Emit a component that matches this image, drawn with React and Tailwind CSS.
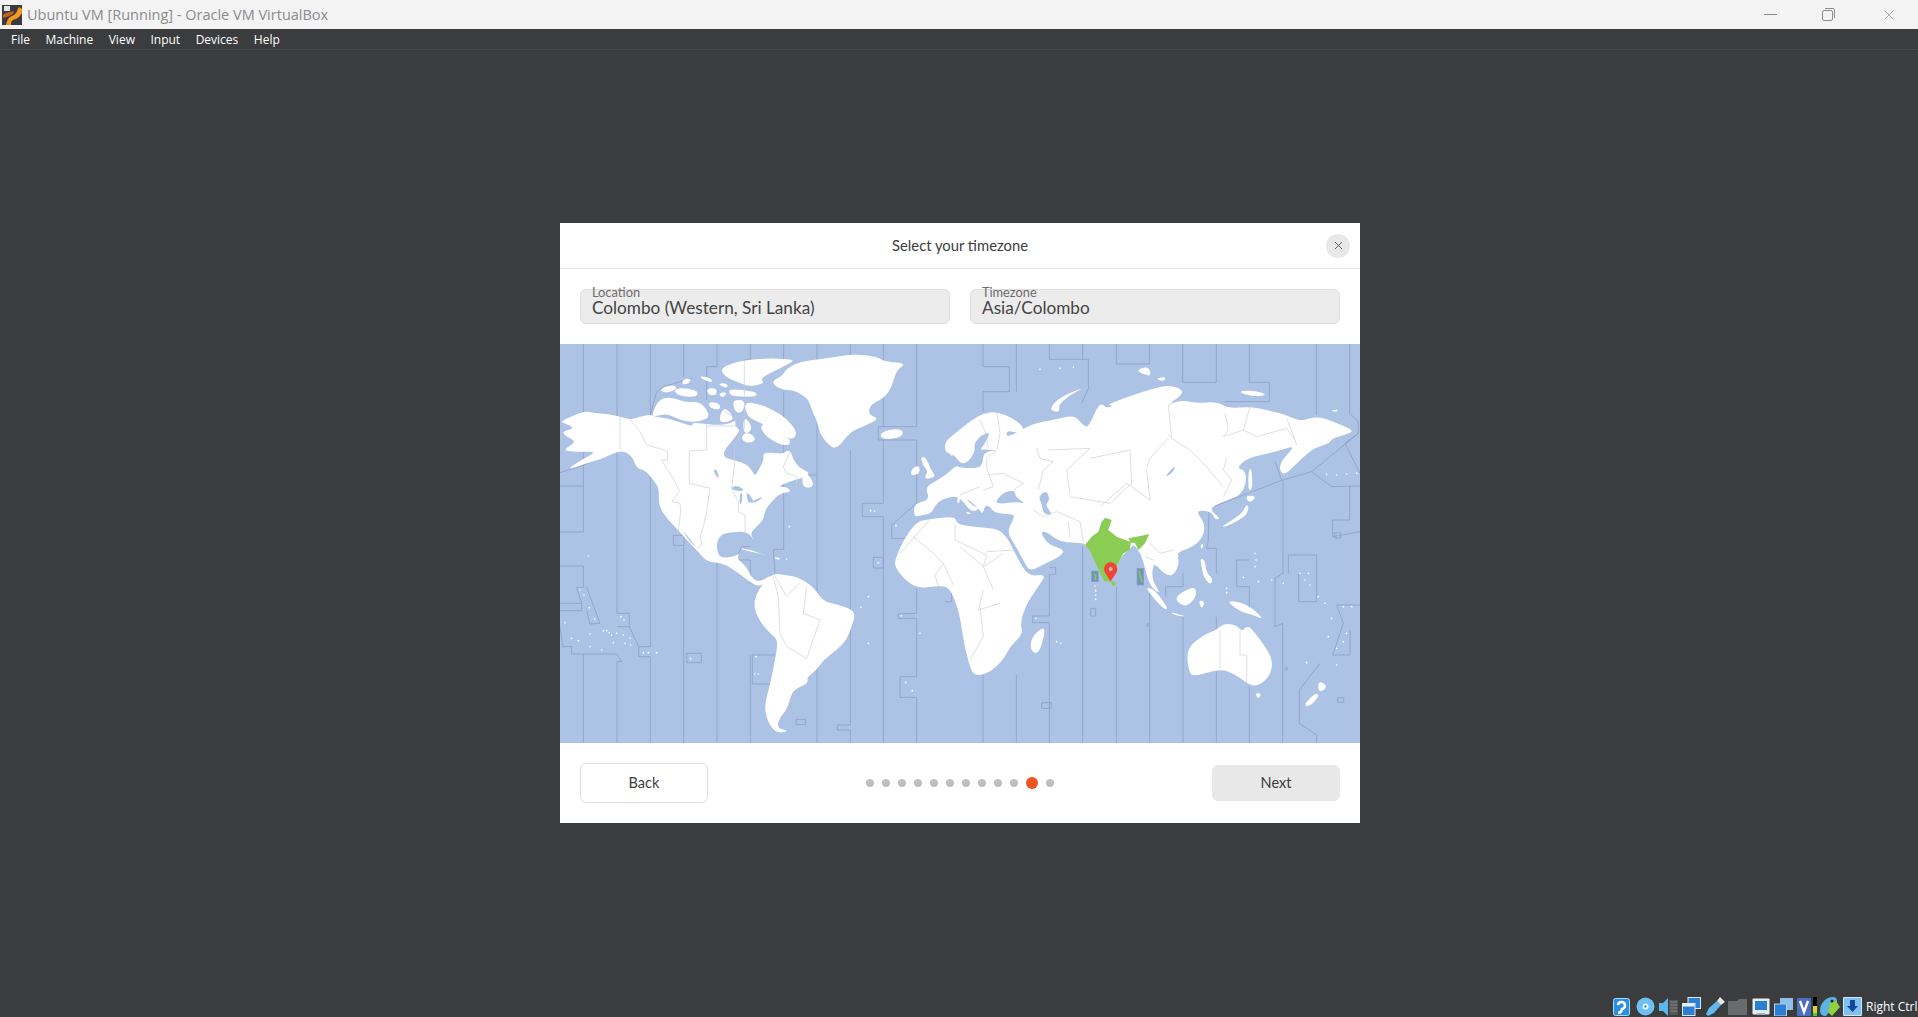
import { X } from 'lucide-react';

const menus = ['File', 'Machine', 'View', 'Input', 'Devices', 'Help'];
const steps = [0, 1, 2, 3, 4, 5, 6, 7, 8, 9, 10, 11];

// the map is traced at 3x, pieces come from crops that start at different offsets
const shift = (pts, dx, dy) =>
  pts.trim().split(/\s+/).map((p) => {
    const [x, y] = p.split(',').map(Number);
    return `${x + dx},${y + dy}`;
  }).join(' ');

const NA = [0, 15];
const EU = [1020, 150];
const AS = [1620, 120];
const poly = (pts, [dx, dy]) => `M${shift(pts, dx, dy)}Z`;

// rounds the corners of a traced outline, each corner becomes a curve between edge midpoints
const smooth = (d) => {
  const pts = d.replace(/[MZ]/g, ' ').trim().split(/\s+/).map((p) => p.split(',').map(Number));
  const mid = (a, b) => [(a[0] + b[0]) / 2, (a[1] + b[1]) / 2];
  const start = mid(pts[pts.length - 1], pts[0]);
  let out = `M${start[0]},${start[1]}`;
  pts.forEach((p, i) => {
    const m = mid(p, pts[(i + 1) % pts.length]);
    out += ` Q${p[0]},${p[1]} ${m[0]},${m[1]}`;
  });
  return `${out}Z`;
};

const zoneLines = [
  '70,12 70,576 0,576', '0,438 70,438', '0,678 70,678 70,742 50,742 65,790 0,790', '65,790 65,812 0,812',
  '80,742 120,850 90,852 80,812', '0,860 8,920 35,920 35,942 170,942 185,965 171,965', '70,942 70,1209',
  '171,12 171,820 208,820 208,860 236,920 236,950 271,950 271,1209', '171,860 208,860',
  '171,965 171,1209', '236,920 271,920 271,400', '271,12 271,225 290,155 310,140 395,115', '371,12 371,110', '371,620 371,1209',
  '340,586 372,586 372,616 340,616 340,586', '380,940 424,940 424,968 380,968 380,940',
  '471,12 471,80 440,80 440,180', '471,650 471,1209', '571,12 571,60 553,60', '571,620 545,620 527,660 571,660 571,730', '571,945 571,1209',
  '577,945 650,945', '577,945 577,1032 630,1032', '671,12 671,60', '671,155 671,628 640,628 645,700',
  '771,12 771,1209', '771,405 745,405', '871,12 871,275', '871,330 871,1155 832,1155 832,1170 871,1170 871,1209',
  '970,12 970,260', '970,300 970,490 907,490 907,530 970,530 970,1209', '940,652 970,652 970,684 940,684 940,652',
  '1070,12 1070,260 955,260 955,300 1070,300 1070,490 995,555 995,595 1050,595',
  '1070,745 1070,820 1015,822 1015,835 1070,835 1070,1010 1020,1010 1020,1072 1070,1072 1070,1209',
  '0,398 60,380 170,330', '708,1138 737,1138 737,1153 708,1153 708,1138', '1155,785 1175,785 1175,745',
];

const zoneLinesRight = [
  '69,12 69,80 148,80 148,155 69,155 69,215', '69,1005 69,1209', '169,12 169,155', '169,1005 169,1209',
  '268,12 268,58 385,58 385,145 365,190', '368,12 368,58', '268,683 287,683 287,703 268,703 268,828 218,828 218,848 268,848 268,1209',
  '368,620 368,1209', '469,12 469,72 568,72 568,12', '469,740 469,1209', '569,760 569,1209',
  '668,12 668,127 769,127 769,12', '868,12 868,127 928,127 928,185 795,185', '669,830 669,1209', '617,770 617,740 669,740 669,700',
  '769,625 740,625 745,600 747,505 968,420 1055,395 1195,280', '769,625 769,700', '769,830 769,1209',
  '868,660 830,660 830,740 868,740 868,820', '868,1040 868,1209', '945,365 965,420',
  '969,420 969,700 945,715 945,860 968,850 968,1209', '985,645 1070,645 1070,785 1016,785 1016,700', '985,645 985,700',
  '1069,12 1069,225', '1169,12 1169,220 1195,245 1195,280 1155,310 1200,400', '1055,395 1115,440 1200,438',
  '1169,438 1169,540 1118,540 1118,590 1200,575', '1130,795 1200,795', '1130,795 1150,850 1118,945 1170,945 1170,870',
  '1018,1050 1080,970', '1018,1050 1018,1150 1070,1185 1070,1209', '1133,1073 1151,1073 1151,1087 1133,1087 1133,1073',
  '245,1088 274,1088 274,1105 245,1105 245,1088', '392,805 407,805 407,828 392,828 392,805', '1124,578 1142,578 1142,594 1124,594 1124,578',
];

const northAmerica = `0,230 40,212 75,198 110,205 150,208 180,215 212,225 240,215 270,208 285,215 330,222 360,232 400,245 395,232 440,238 480,240 510,235 527,225 525,243 540,255 530,270 510,295 490,320 495,340 525,345 560,358 575,375 585,395 598,370 612,345 608,325 640,322 665,328 690,312 700,345 720,370 745,380 745,395 720,400 690,410 650,425 680,425 695,440 660,445 635,470 615,495 610,525 590,545 570,565 585,592 565,560 515,560 480,570 468,600 478,640 520,635 540,625 530,640 560,665 575,700 600,712 630,690 640,700 600,725 575,715 530,680 490,655 440,650 415,620 385,590 345,545 320,520 295,480 298,430 280,405 255,375 230,370 215,330 180,315 130,340 80,355 20,375 55,350 110,320 75,320 30,320 10,315 50,290 20,275 5,260 45,250 15,235`;

const canadaIslands = [
  '552,170 600,178 640,195 680,220 712,262 700,285 660,270 620,245 600,232 580,225 560,210',
  '600,240 625,235 660,270 690,280 690,300 665,300 635,285 610,265',
  '548,268 570,262 590,285 565,295 545,285',
  '555,215 580,250 555,270 548,240',
  '300,130 345,118 350,135 310,145',
  '345,130 385,130 415,140 410,155 370,155 345,145',
  '370,102 395,100 385,118 365,118',
  '275,210 295,165 330,155 375,172 420,170 445,200 445,222 400,232 360,225 320,205 285,215',
  '415,92 450,98 460,112 435,108',
  '440,130 470,130 470,150 445,150',
  '445,170 480,175 480,195 450,190',
  '478,145 500,140 495,155 480,155',
  '505,130 590,140 590,155 530,155 510,150',
  '475,115 500,115 505,128 485,125',
  '480,70 530,50 600,40 710,42 680,60 640,80 600,100 615,115 570,125 530,110 495,95',
  '490,190 505,195 525,225 480,235 480,210',
  '520,165 555,165 550,200 530,205 520,185',
  '725,395 745,385 765,425 730,430',
  '535,610 565,612 600,625 640,640 610,628 570,620',
];

const westEurasia = '42,340 90,330 75,292 110,272 150,245 160,232 175,228 160,205 150,190 135,185 135,155 165,130 215,90 250,70 290,65 340,85 375,115 355,130 320,120 320,145 390,105 430,95 460,90 520,75 540,95 560,115 575,90 590,55 605,40 620,55 640,45';
const eastEurasia = '20,75 85,50 160,25 210,15 250,30 240,50 205,72 250,60 290,70 350,65 385,85 450,80 500,90 560,105 600,125 650,108 700,125 765,152 735,165 695,175 690,190 640,205 600,240 548,292 535,250 590,195 540,212 495,222 440,235 410,265 435,270 440,310 420,345 385,360 345,375 330,390 362,415 345,420 335,395 285,390 315,430 310,470 280,500 225,520 240,545 220,590 190,580 160,545 155,600 185,645 150,620 135,565 125,525 100,490';
const southEurasia = '690,480 670,490 650,530 630,575 615,572 585,510 572,480 555,468 552,458 500,458 470,450 440,425 420,425 445,465 495,478 480,500 445,515 390,545 375,520 345,465 320,425 345,380 335,372 285,370 270,350 255,345 248,375 232,350 195,322 215,345 240,355 215,368 190,335 170,318 130,325 105,345 95,370 55,378 42,378';

const land = [
  poly(northAmerica, NA),
  ...canadaIslands.map((p) => poly(p, NA)),
  // greenland, iceland, south america, africa
  'M640,120 665,110 680,85 720,65 800,55 880,42 950,50 975,65 1040,70 1010,90 1000,125 985,160 960,180 930,195 925,225 960,235 910,260 870,275 830,330 800,310 780,280 770,240 755,210 745,175 700,150 670,150 640,135Z',
  'M960,280 1000,265 1030,272 1025,290 990,298 965,295Z',
  'M640,700 680,705 715,712 760,740 790,785 840,795 888,815 875,860 860,900 830,930 790,960 770,990 740,1012 745,1030 710,1045 695,1060 680,1110 660,1130 650,1165 690,1172 650,1180 625,1150 612,1100 630,1035 645,960 655,900 630,880 600,845 580,800 590,760 610,730Z',
  'M640,650 665,655 650,660Z',
  'M1005,660 1030,600 1070,545 1105,538 1185,528 1192,555 1270,562 1330,570 1370,650 1405,710 1460,702 1435,740 1400,790 1380,850 1390,880 1350,920 1330,960 1285,1000 1240,1008 1225,965 1210,900 1200,830 1185,780 1165,740 1130,738 1070,745 1030,715 1005,680Z',
  `M${shift(westEurasia, ...EU)} ${shift(eastEurasia, ...AS)} ${shift(southEurasia, ...EU)}Z`,
  poly('62,198 80,205 90,235 110,262 70,268 85,245 68,225', EU),
  poly('35,235 58,225 60,250 32,258', EU),
  poly('172,322 180,322 178,340 172,340', EU),
  poly('195,365 215,368 205,375', EU),
  poly('445,270 455,265 458,325 445,335', AS),
  poly('440,345 470,350 450,368 440,360', AS),
  poly('365,440 405,415 430,395 437,375 447,378 440,405 410,425 375,440', AS),
  poly('300,495 312,490 305,510', AS),
  poly('225,525 238,522 232,538', AS),
  poly('300,535 315,540 318,575 340,600 330,615 310,590 305,560', AS),
  poly('135,620 165,630 205,685 195,690 165,660', AS),
  poly('205,695 265,710 230,708', AS),
  poly('225,650 285,615 290,650 260,680 235,670', AS),
  poly('295,660 315,665 305,690', AS),
  poly('375,660 440,670 495,720 460,705 420,695', AS),
].map(smooth);

const landRight = [
  'M215,890 250,860 255,880 235,945 210,930Z',
  'M680,925 730,885 770,870 790,850 830,855 845,875 865,855 890,885 940,955 930,1010 890,1040 860,1030 830,1005 780,985 700,1012 685,990Z',
  'M885,1060 905,1060 895,1078Z', 'M1075,1020 1105,1040 1075,1060Z', 'M1065,1060 1030,1095 1050,1100 1080,1065Z',
  'M265,210 300,170 378,140 330,165 295,195 300,218Z', 'M530,90 565,78 575,110 545,100Z', 'M585,115 620,110 610,125Z',
  'M830,155 880,150 925,165 880,170Z', 'M1110,212 1135,208 1130,216Z',
].map(smooth);

const seas = [
  poly('510,430 530,420 555,435 535,440', NA),
  poly('540,445 548,445 545,478 538,475', NA),
  poly('560,440 585,470 565,475 560,455', NA),
  poly('575,470 612,452 600,465 580,475', NA),
  poly('460,375 470,372 478,400 468,395', NA),
  poly('365,550 395,590 410,610 385,585', NA),
  poly('160,220 175,232 210,235 245,232 250,195 262,185 295,180 250,178 240,180 255,160 272,125 245,135 222,160 225,185 205,215 185,222 170,205 155,190 155,215', EU),
  poly('285,335 310,308 345,300 345,320 378,342 350,335 300,342', EU),
  poly('415,320 440,300 450,330 435,345 460,375 430,372 425,340', EU),
  poly('195,288 228,255 222,272 205,288', AS),
].map(smooth);

const india = poly('615,383 635,390 625,420 650,440 690,455 685,445 710,440 748,432 735,460 715,480 705,458 692,458 690,480 670,490 650,530 630,575 612,572 582,510 570,482 555,465 575,440 595,425 605,395', EU);

const borders = [
  ['180,215 180,315', NA], ['212,225 240,260 260,300 322,318 322,345 305,345 345,410 358,440 335,470 360,475 362,500 355,555', NA],
  ['440,238 440,315 388,318 388,415 450,430 440,500 430,545 420,575 425,600 410,610', NA],
  ['525,345 515,430 535,470 535,500 555,510 555,570', NA], ['480,190 527,220 527,243 440,243', NA], ['553,45 553,250 525,300 522,345', NA],
  ['690,320 670,365 680,385 710,395 710,430', NA],
  ['640,710 655,770 660,880 680,920 740,955 780,840 730,820 740,740', [0, 0]], ['640,700 680,770 718,730', [0, 0]],
  ['240,90 260,135 265,175', EU], ['290,65 300,130 290,180 260,205 260,235 280,290 250,300', EU], ['260,255 310,250 370,280 340,300', EU],
  ['410,175 420,205 460,215 430,240 415,300', EU], ['445,180 570,175 500,240 510,310', EU], ['570,205 690,180 695,280 630,340 510,320', EU],
  ['400,360 430,380 470,365 540,395 550,455', EU], ['505,395 510,445', EU], ['40,440 100,490 130,520 105,555 115,590', EU],
  ['165,405 165,450 260,495 250,530 280,600', EU], ['260,485 345,480', EU], ['250,600 235,660 300,640', EU], ['180,315 240,290', EU],
  ['0,490 90,388', EU], ['130,520 160,585', EU],
  ['205,165 215,175 205,75 250,55', AS], ['215,175 270,210 310,250 370,320', AS], ['140,265 150,235 205,175', AS],
  ['0,380 80,310 150,360 140,270', AS], ['375,100 385,150 370,170 430,150 470,170 560,145 585,180 590,195', AS], ['560,115 585,180', AS],
  ['380,235 370,270 395,300 370,350', AS], ['450,80 430,150', AS], ['150,490 180,520 220,510', AS], ['135,530 160,540', AS],
  ['1980,870 1980,985', [0, 0]], ['2040,870 2040,945 2060,945 2060,1030', [0, 0]],
  ['1260,800 1270,890 1230,960', [0, 0]], ['1200,620 1270,680 1330,640', [0, 0]],
];

const dots = [
  [85, 648], [60, 750], [72, 765], [88, 803], [104, 837], [15, 848], [35, 895], [55, 902], [90, 882], [90, 920], [125, 930],
  [130, 872], [140, 872], [148, 878], [155, 885], [170, 880], [190, 885], [210, 895], [160, 908], [195, 910], [212, 915], [183, 830], [192, 840],
  [250, 938], [265, 938], [290, 938], [392, 956], [588, 950], [584, 1002], [595, 1002], [688, 560], [680, 657], [925, 770], [903, 802], [925, 910],
  [1080, 880], [1037, 1027], [1057, 1052], [932, 512], [944, 513], [1008, 557], [1024, 827], [955, 668],
];

const dotsRight = [
  [885, 640], [888, 660], [885, 680], [850, 712], [895, 725], [935, 720], [970, 730], [800, 745], [800, 758], [1020, 700], [1045, 700], [1035, 720],
  [1050, 735], [1075, 770], [1095, 790], [1150, 800], [1175, 800], [1115, 835], [1105, 890], [1160, 880], [1150, 905], [1130, 925], [1130, 975], [1040, 968],
  [405, 738], [407, 752], [407, 765], [407, 778], [290, 905], [303, 910], [228, 835], [1100, 403], [1130, 405], [1160, 402], [1190, 400], [240, 88], [300, 85], [340, 82],
];

function WorldMap() {
  return (
    <svg viewBox="0 12 2400 1197" className="block h-[399px] w-full" preserveAspectRatio="none">
      <rect x="0" y="12" width="2400" height="1197" fill="#adc3e5" />
      <g fill="none" stroke="#8ba0c1" strokeWidth="2.4">
        {zoneLines.map((p, i) => <polyline key={i} points={p} />)}
        <g transform="translate(1200,0)">
          {zoneLinesRight.map((p, i) => <polyline key={i} points={p} />)}
          <circle cx="564" cy="855" r="4" />
          <circle cx="979" cy="986" r="4" />
        </g>
      </g>
      <g fill="#fff">
        {land.map((d, i) => <path key={i} d={d} />)}
      </g>
      <g fill="#adc3e5">
        {seas.map((d, i) => <path key={i} d={d} />)}
      </g>
      <g fill="#fff" transform="translate(1200,0)">
        {landRight.map((d, i) => <path key={i} d={d} />)}
        {dotsRight.map(([x, y], i) => <circle key={i} cx={x} cy={y} r="2.5" />)}
      </g>
      <g fill="#fff">
        {dots.map(([x, y], i) => <circle key={i} cx={x} cy={y} r="2.5" />)}
      </g>
      <g fill="none" stroke="#c8ced6" strokeWidth="2">
        {borders.map(([p, [dx, dy]], i) => <polyline key={i} points={shift(p, dx, dy)} />)}
      </g>
      <path d={india} fill="#8bcc54" />
      <g transform="translate(1200,0)">
        <path d="M452,722 465,725 468,735 458,738Z" fill="#8bcc54" />
        <rect x="395" y="693" width="20" height="32" fill="#6f96b8" stroke="#8ba0c1" strokeWidth="2" />
        <path d="M401,700 408,708 405,720" fill="none" stroke="#8bcc54" strokeWidth="4" />
        <rect x="531" y="685" width="20" height="50" fill="#6f96b8" stroke="#8ba0c1" strokeWidth="2" />
        <path d="M538,692 540,708 546,726" fill="none" stroke="#8bcc54" strokeWidth="4" />
        <path d="M452,725 C445,710 432,700 432,687 A20,20 0 0 1 472,687 C472,700 459,710 452,725Z" fill="#f44336" />
        <circle cx="452" cy="687" r="6" fill="#a9c7a5" />
      </g>
    </svg>
  );
}

function Field({ label, value }) {
  return (
    <div className="relative h-[35px] flex-1 rounded-md border border-[#dedede] bg-[#ececec] pl-[11px] pt-[8px] text-[17.2px] leading-[20px] text-[#444]">
      <span className="absolute -top-[4px] left-[9px] bg-[linear-gradient(transparent_40%,#ececec_40%)] px-[2px] text-[12.8px] leading-[12px] text-[#6b6b6b]">{label}</span>
      {value}
    </div>
  );
}

function VboxLogo() {
  return (
    <svg width="20" height="20" viewBox="0 0 20 20">
      <rect width="20" height="20" fill="#3a3a40" />
      <rect x="2" y="1" width="6" height="5" fill="#dfe3ea" />
      <path d="M4,20 C6,12 8,12 12,10 C15,8 15,5 17,2 L20,4 L20,8 C17,13 14,14 11,15 C9,16 9,18 9,20Z" fill="#f59b1b" />
      <path d="M1,10 C4,7 8,7 12,6 L11,9 C8,11 4,12 1,13Z" fill="#c65f17" />
    </svg>
  );
}

function StatusIcons() {
  return (
    <div className="flex items-center">
      <svg className="ml-[13px]" width="17" height="18" viewBox="0 0 17 18">
        <rect x="0.5" y="0.5" width="16" height="17" rx="2" fill="#2b8fe0" stroke="#a9dcfb" />
        <path d="M5,7 A3.5,3.5 0 1 1 9,11 C9,13 7,15 5,15" fill="none" stroke="#fff" strokeWidth="2.5" />
      </svg>
      <svg className="ml-[6px]" width="19" height="19" viewBox="0 0 19 19">
        <circle cx="9.5" cy="9.5" r="9" fill="#6cc0f2" />
        <circle cx="9.5" cy="9.5" r="3" fill="#eef8ff" />
        <circle cx="9.5" cy="9.5" r="1.2" fill="#3b8fcf" />
      </svg>
      <svg className="ml-[4px]" width="19" height="18" viewBox="0 0 19 18">
        <rect x="10" y="2" width="9" height="15" fill="#555" />
        <path d="M11,4 H18 M11,7 H18 M11,10 H18 M11,13 H18" stroke="#888" strokeWidth="1" />
        <path d="M0,5 H4 L9,0 V18 L4,13 H0Z" fill="#5bb7ee" />
      </svg>
      <svg className="ml-[4px]" width="19" height="19" viewBox="0 0 19 19">
        <rect x="6" y="0.5" width="12.5" height="11" fill="#2c7fd6" stroke="#dfe7ef" />
        <rect x="0.5" y="6.5" width="12.5" height="12" fill="#2c7fd6" stroke="#dfe7ef" />
        <rect x="1" y="7" width="11.5" height="2.5" fill="#e9f3fb" />
      </svg>
      <svg className="ml-[5px]" width="19" height="19" viewBox="0 0 19 19">
        <path d="M0,17 L3,11 L11,4 L15,8 L8,16 L2,19Z" fill="#63b8ee" />
        <path d="M11,4 L14,0 L19,5 L15,8Z" fill="#e8e8e8" />
      </svg>
      <svg className="ml-[3px]" width="19" height="16" viewBox="0 0 19 16">
        <path d="M0,2 H9 L11,0 H19 V16 H0Z" fill="#6b6b6b" />
      </svg>
      <svg className="ml-[5px]" width="18" height="18" viewBox="0 0 18 18">
        <rect x="0.5" y="0.5" width="17" height="16" rx="1" fill="#e6eef5" />
        <rect x="3" y="3" width="12" height="9" fill="#2a7fd4" />
        <rect x="5" y="15" width="8" height="2" fill="#9db3c5" />
      </svg>
      <svg className="ml-[4px]" width="19" height="18" viewBox="0 0 19 18">
        <rect x="6" y="0" width="13" height="12" fill="#8fbfe8" />
        <rect x="0.5" y="6" width="12" height="12" fill="#2c7fd6" stroke="#b7d4ec" />
      </svg>
      <svg className="ml-[4px]" width="14" height="18" viewBox="0 0 14 18">
        <rect x="0" y="0" width="14" height="18" rx="1" fill="#4a6fc2" />
        <path d="M3,3 L7,14 L11,3" fill="none" stroke="#fff" strokeWidth="2.4" />
      </svg>
      <div className="ml-[2px] flex h-[19px] w-[4px] flex-col justify-end bg-black">
        <div className="h-[7px] bg-[#d9d92a]" />
        <div className="h-[3px] bg-[#3fcf3f]" />
      </div>
      <svg className="ml-[3px]" width="20" height="19" viewBox="0 0 20 19">
        <path d="M0,14 C0,6 6,0 13,0 C17,0 17,3 17,6 L6,19 C2,19 0,17 0,14Z" fill="#5fb2e6" />
        <path d="M10,6 L16,4 L20,10 L12,19 L8,15Z" fill="#8fd13f" />
        <circle cx="12" cy="4" r="1.5" fill="#222" />
      </svg>
      <svg className="ml-[3px]" width="19" height="19" viewBox="0 0 19 19">
        <rect x="0" y="0" width="19" height="19" rx="1" fill="#cfe6f7" />
        <rect x="1" y="1" width="17" height="17" fill="#7fc1ee" />
        <path d="M7,3 H12 V9 H15 L9.5,15 L4,9 H7Z" fill="#10479c" />
      </svg>
    </div>
  );
}

export default function App() {
  return (
    <div className="flex h-screen flex-col overflow-hidden bg-[#3b3c3e] font-['Open_Sans',sans-serif]">
      <div className="flex h-[29px] shrink-0 items-center bg-[#f3f3f3] pl-[2px]">
        <VboxLogo />
        <span className="ml-[5px] text-[14.5px] text-[#8b8b8b]">Ubuntu VM [Running] - Oracle VM VirtualBox</span>
        <div className="ml-auto flex items-center pr-[21px] text-[#8b8b8b]">
          <div className="h-px w-[13px] bg-[#8b8b8b]" />
          <svg className="ml-[45px]" width="13" height="13" viewBox="0 0 13 13" fill="none" stroke="#8b8b8b">
            <rect x="0.5" y="2.5" width="10" height="10" rx="1.5" />
            <path d="M3,0.5 H11 A1.5,1.5 0 0 1 12.5,2 V10" />
          </svg>
          <X className="ml-[46px]" size={16} strokeWidth={1} />
        </div>
      </div>
      <div className="flex h-[21px] shrink-0 items-center gap-[15.5px] border-b border-[#444548] pl-[11px] pt-px text-[12px] text-white">
        {menus.map((m) => <span key={m}>{m}</span>)}
      </div>

      <div className="flex flex-1 items-center justify-center pb-[2px] pl-[2px]">
        <div className="flex h-[600px] w-[800px] flex-col bg-white font-['Lato',sans-serif] text-[#3d3d3d]">
          <div className="relative flex h-[46px] shrink-0 items-center justify-center border-b border-[#e6e6e6] text-[14.8px]">
            Select your timezone
            <div className="absolute right-[10px] top-[11px] flex h-[24px] w-[24px] items-center justify-center rounded-full bg-[#e8e8e8]">
              <X size={13} strokeWidth={1.5} />
            </div>
          </div>
          <div className="flex h-[75px] shrink-0 gap-5 px-5 pt-[20px]">
            <Field label="Location" value="Colombo (Western, Sri Lanka)" />
            <Field label="Timezone" value="Asia/Colombo" />
          </div>
          <WorldMap />
          <div className="flex flex-1 items-center justify-between px-5">
            <button className="h-[40px] w-[128px] rounded-md border border-[#dedede] bg-white text-[14.5px]">Back</button>
            <div className="flex items-center gap-2">
              {steps.map((s) => (
                <span key={s} className={s === 10 ? 'h-[12px] w-[12px] rounded-full bg-[#e95420]' : 'h-2 w-2 rounded-full bg-[#c0c0c0]'} />
              ))}
            </div>
            <button className="h-[36px] w-[128px] rounded-md bg-[#e8e8e8] text-[14.5px]">Next</button>
          </div>
        </div>
      </div>

      <div className="flex h-[20px] shrink-0 items-start justify-end overflow-hidden">
        <StatusIcons />
        <div className="ml-[4px] w-[52px] overflow-hidden whitespace-nowrap text-[12px] leading-[19px] text-white">Right Ctrl</div>
      </div>
    </div>
  );
}
